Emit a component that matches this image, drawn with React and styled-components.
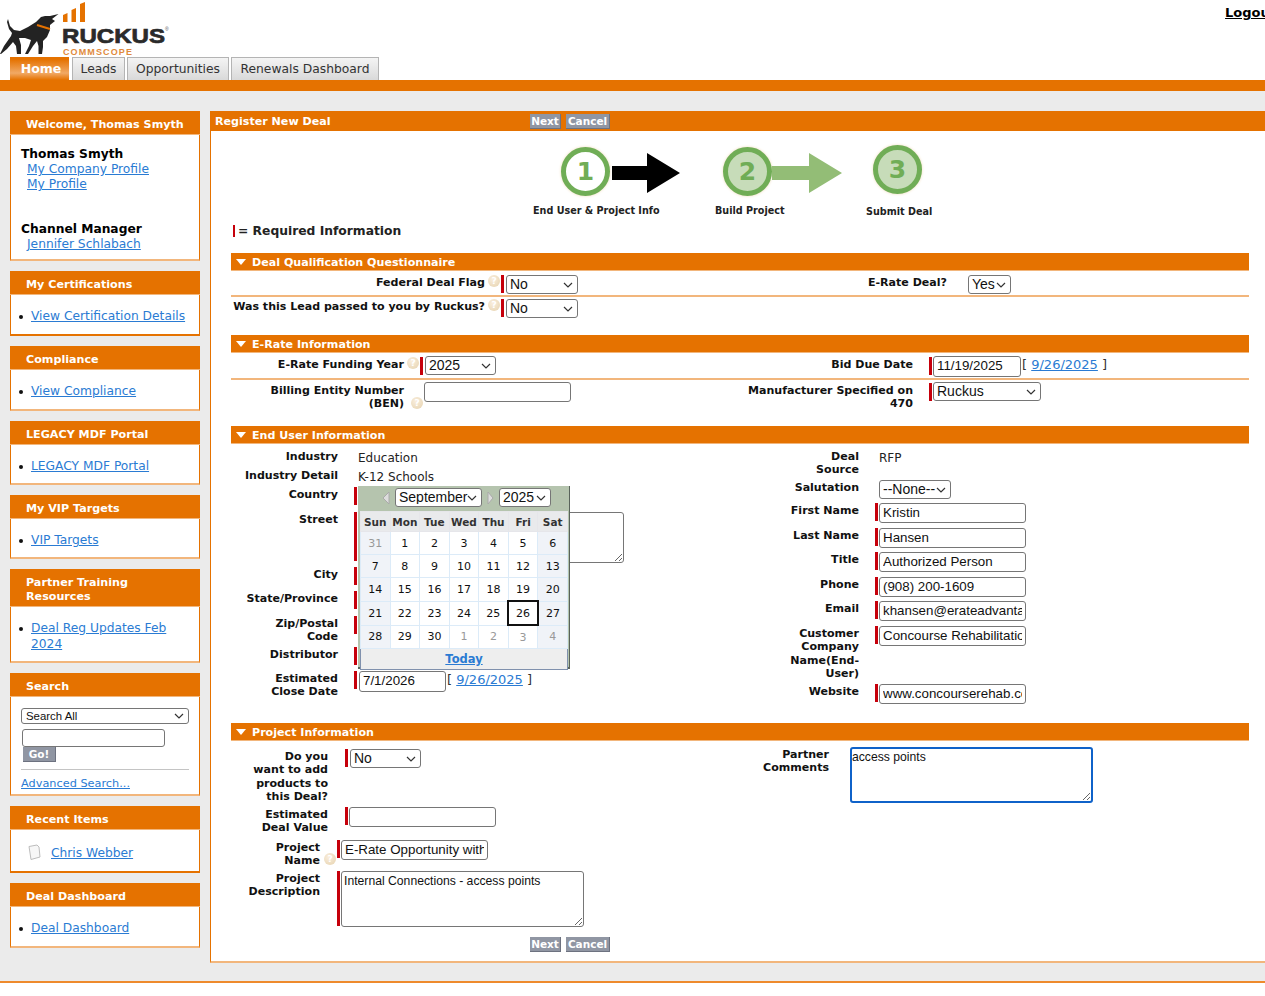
import {useState} from "react";
import styled, {createGlobalStyle} from "styled-components";

const orange = '#e57200'
const soft = '#f2b67c'
const link = '#2a7bd3'
const verdana = '"DejaVu Sans", Verdana, sans-serif'
const arial = '"Liberation Sans", Arial, sans-serif'
const chevron = "url(\"data:image/svg+xml,%3Csvg xmlns='http://www.w3.org/2000/svg' width='10' height='6'%3E%3Cpath d='M1 1l4 4 4-4' fill='none' stroke='%23333' stroke-width='1.2'/%3E%3C/svg%3E\")"

const Global = createGlobalStyle`
  html, body {
    margin: 0;
    padding: 0;
    background: #fff;
  }

  body {
    font-family: ${verdana};
    font-size: 12px;
    color: #000;
    overflow-x: hidden;
  }

  a {
    color: ${link};
    text-decoration: underline;
  }
`

const Page = styled.div`
  width: 1265px;
  height: 996px;
  overflow: hidden;
`

const Masthead = styled.header`
  height: 57px;
  width: 1276px;
  display: flex;
  justify-content: space-between;
  align-items: flex-start;
`

const Logout = styled.a`
  margin-top: 5px;
  font-size: 13px;
  font-weight: 700;
  color: #000;
`

const Tabs = styled.nav`
  display: flex;
  gap: 2px;
  padding-left: 10px;
  height: 23px;
`

const Tab = styled.a`
  box-sizing: border-box;
  height: 23px;
  width: ${p => p.$w}px;
  display: flex;
  align-items: center;
  justify-content: center;
  font-size: 12.3px;
  text-decoration: none;
  color: #333;
  border: 1px solid #b4b4b4;
  border-bottom: 0;
  background: linear-gradient(#f4f4f4, #d9d9d9);
  margin-left: ${p => p.$ml || 0}px;

  &.on {
    border: 0;
    padding-left: 3px;
    color: #fff;
    font-size: 12.5px;
    font-weight: 700;
    background: linear-gradient(${orange} 10%, #f1a965 70%, ${orange} 100%);
  }
`

const OrangeBar = styled.div`
  height: 11px;
  background: ${orange};
`

const Shell = styled.div`
  background: #ebebeb;
  height: 892px;
  border-bottom: 2px solid #ee8a2c;
  box-sizing: border-box;
  padding-top: 20px;
  display: flex;
  align-items: flex-start;
`

const Sidebar = styled.aside`
  width: 190px;
  margin-left: 10px;
  display: flex;
  flex-direction: column;
  gap: 10px;
  flex: none;
`

const SideBox = styled.section`
  box-sizing: border-box;
  height: ${p => p.$h}px;
  background: #fff;
  border: 1px solid ${orange};
  border-top: 0;
  border-bottom: 2px solid ${p => p.$soft ? soft : orange};
`

const SideHead = styled.h3`
  margin: 0 -1px;
  box-sizing: border-box;
  min-height: 24px;
  padding: 7px 10px 2px 16px;
  background: ${orange};
  color: #fff;
  font-size: 11.15px;
  line-height: 14px;
  font-weight: 700;
  border-bottom: 1px solid ${soft};
`

const SideList = styled.ul`
  margin: 0;
  padding: 13px 10px 0 8px;
  list-style: none;
  font-size: 12.25px;
  line-height: 16px;

  li {
    display: flex;
    gap: 8px;
  }

  li::before {
    content: '';
    flex: none;
    width: 4px;
    height: 4px;
    margin-top: 7px;
    border-radius: 50%;
    background: #111;
  }
`

const WelcomeBody = styled.div`
  padding: 12px 0 0 10px;
  font-size: 12.25px;
  line-height: 15px;

  strong {
    display: block;
  }

  a {
    display: block;
    margin-left: 6px;
  }
`

const Spacer = styled.div`
  height: ${p => p.$h}px;
`

const SearchBody = styled.div`
  padding: 11px 10px 0;

  hr {
    border: 0;
    border-top: 1px solid #c4c4c4;
    margin: 7px 0 6px;
  }

  a {
    font-size: 11.3px;
  }
`

const Recent = styled.div`
  display: flex;
  align-items: center;
  gap: 9px;
  padding: 14px 0 0 15px;
  font-size: 12.25px;
`

const Main = styled.main`
  margin-left: 10px;
  width: 1070px;
  flex: none;
  box-sizing: border-box;
  height: 852px;
  background: #fff;
  border-left: 1px solid ${orange};
  border-bottom: 2px solid ${soft};
`

const MainHead = styled.div`
  margin-left: -1px;
  height: 20px;
  background: ${orange};
  color: #fff;
  font-size: 11.1px;
  font-weight: 700;
  display: flex;
  align-items: center;
  padding-left: 5px;

  span {
    width: 315px;
  }
`

const Buttons = styled.div`
  display: flex;
  gap: 5px;
  padding-left: ${p => p.$pl || 0}px;
  margin-top: ${p => p.$mt || 0}px;
`

const Btn = styled.button`
  display: block;
  box-sizing: border-box;
  height: 15px;
  width: ${p => p.$w}px;
  padding: 0;
  margin-left: ${p => p.$ml || 0}px;
  border: 0;
  border-right: 1px solid #6d7280;
  border-bottom: 1px solid #6d7280;
  background: #9096a3;
  color: #fff;
  font-family: ${verdana};
  font-size: 10.5px;
  font-weight: 700;
`

const Stepper = styled.div`
  display: flex;
  padding: 13px 0 0 322px;
  height: 92px;
  box-sizing: border-box;
`

const Step = styled.div`
  width: ${p => p.$w}px;
  flex: none;
`

const StepTrack = styled.div`
  display: flex;
  align-items: center;
  height: 54px;
  padding-left: ${p => p.$pl}px;
`

const StepDot = styled.div`
  box-sizing: border-box;
  width: 49px;
  height: 49px;
  margin-top: ${p => p.$mt || 0}px;
  border-radius: 50%;
  border: 5px solid #70ad56;
  background: ${p => p.$done ? '#fff' : '#c7dcb9'};
  color: #70ad56;
  display: flex;
  align-items: center;
  justify-content: center;
  font: 700 25px ${verdana};
  box-shadow: 0 0 3px #f0dcbc;
  flex: none;
`

const StepArrow = styled.svg`
  display: block;
  flex: none;
  margin: 4px 0 0 ${p => p.$ml || 0}px;
`

const StepCaption = styled.div`
  font: 700 10.7px "DejaVu Sans Condensed", ${verdana};
  color: #222;
  margin-top: ${p => p.$mt}px;
`

const Required = styled.div`
  display: flex;
  align-items: center;
  height: 16px;
  margin: 0 0 14px 22px;
  font-size: 12.3px;
  font-weight: 700;
  color: #222;
  gap: 3px;
`

const Content = styled.div`
  width: 1018px;
  margin-left: 20px;
`

const SectionBar = styled.h4`
  margin: ${p => p.$mt || 0}px 0 0;
  box-sizing: border-box;
  height: 18px;
  background: ${orange};
  border-bottom: 1px solid ${soft};
  display: flex;
  align-items: center;
  gap: 5px;
  padding: 1px 0 0 5px;
  color: #fff;
  font-size: 11.1px;
  font-weight: 700;
`

const Caret = styled.i`
  width: 0;
  height: 0;
  border: 5px solid transparent;
  border-top: 6px solid #fff;
  border-bottom: 0;
  margin-right: 1px;
`

const SplitRow = styled.div`
  box-sizing: border-box;
  display: grid;
  grid-template-columns: 509px 1fr;
  height: ${p => p.$h}px;
  margin-top: ${p => p.$mt || 0}px;
  padding-top: ${p => p.$pt || 0}px;
  border-bottom: ${p => p.$line ? `2px solid ${soft}` : '0'};
`

const Columns = styled.div`
  display: grid;
  grid-template-columns: 509px 1fr;
  padding-top: ${p => p.$pt}px;
  position: relative;
`

const Stack = styled.div`
  display: flex;
  flex-direction: column;
  padding-top: ${p => p.$pt || 0}px;
`

const Field = styled.div`
  display: flex;
  align-items: flex-start;
  height: ${p => p.$h ? `${p.$h}px` : 'auto'};
`

const Label = styled.label`
  width: ${p => p.$w}px;
  margin-left: ${p => p.$ml || 0}px;
  flex: none;
  box-sizing: border-box;
  text-align: right;
  font-size: 11.05px;
  font-weight: 700;
  line-height: 13.4px;
  padding-top: ${p => p.$pt ?? 2}px;
  color: #111;
`

const Gutter = styled.div`
  width: ${p => p.$w || 20}px;
  flex: none;
  display: flex;
  justify-content: flex-end;
  align-items: flex-start;
  padding-top: 1px;
  gap: 1px;
  box-sizing: border-box;
  padding-right: ${p => p.$pr || 1}px;
`

const Mark = styled.span`
  display: block;
  width: ${p => p.$w || 3}px;
  height: ${p => p.$h || 18}px;
  background: #c6000b;
  flex: none;
`

const Help = styled.span`
  display: flex;
  align-items: center;
  justify-content: center;
  width: 12px;
  height: 12px;
  border-radius: 50%;
  background: radial-gradient(circle at 40% 35%, #f9eedd, #e6d2ae);
  color: #fff;
  font-size: 9px;
  font-weight: 700;
  margin-top: ${p => p.$mt || 0}px;
  flex: none;
`

const Value = styled.div`
  font-size: 12px;
  line-height: 15px;
  padding-top: 3px;
  color: #222;
`

const Select = styled.select`
  box-sizing: border-box;
  appearance: none;
  display: block;
  width: ${p => p.$w}px;
  height: ${p => p.$h || 19}px;
  margin: ${p => p.$mt ?? 1}px 0 0 ${p => p.$ml || 0}px;
  padding: 0 0 ${p => p.$h ? 0 : 2}px ${p => p.$pl || 3}px;
  border: 1px solid #767676;
  border-radius: 3px;
  font: ${p => p.$fs || 14}px ${arial};
  color: #111;
  background: #fff ${chevron} no-repeat right 4px center;
`

const Input = styled.input`
  display: block;
  box-sizing: border-box;
  width: ${p => p.$w || 147}px;
  height: ${p => p.$h || 20}px;
  margin: ${p => p.$mt ?? 1}px 0 0 ${p => p.$ml || 0}px;
  padding: 0 3px 2px;
  border: 1px solid #767676;
  border-radius: 3px;
  font: 13.33px ${arial};
  color: #111;
  background: #fff;
  outline: 0;
`

const Area = styled.textarea`
  box-sizing: border-box;
  display: block;
  width: ${p => p.$w}px;
  height: ${p => p.$h}px;
  margin: ${p => p.$mt || 0}px 0 0;
  padding: ${p => p.$focus ? '1px 0' : '2px'};
  border: ${p => p.$focus ? '2px solid #0f62c9' : '1px solid #767676'};
  border-radius: 3px;
  font: 12.2px ${arial};
  color: #111;
  outline: 0;
`

const DateLink = styled.span`
  font-size: 13px;
  line-height: 18px;
  padding-left: 1px;
  white-space: nowrap;
  color: #333;
  margin-top: ${p => p.$mt || 0}px;
`

const Calendar = styled.div`
  position: absolute;
  left: 127px;
  top: 42px;
  box-sizing: border-box;
  width: 212px;
  height: 183px;
  background: #b5c4ae;
  padding: 1px 2px 3px 2px;
  border-right: 1px solid #59635a;
  border-bottom: 2px solid #59635a;
`

const CalBar = styled.div`
  display: flex;
  align-items: flex-start;
  box-sizing: border-box;
  height: 24px;
  padding: 1px 0 0 22px;
  gap: 5px;
`

const CalArrow = styled.svg`
  display: block;
  flex: none;
  margin-top: 3px;
`

const CalTable = styled.table`
  width: 208px;
  table-layout: fixed;
  border-collapse: collapse;
  background: #eee;
  border: 1px solid #8091ad;
  font-size: 11px;

  th {
    height: 19px;
    padding: 0;
    font-size: 10.5px;
    font-weight: 700;
    color: #333;
    background: #e9eaec;
    border: 1px solid #e6e6ea;
  }

  td {
    height: 22px;
    padding: 0;
    text-align: center;
    background: #fff;
    color: #111;
    border: 1px solid #dcebf8;
  }

  td.end {
    background: #f0f3f8;
  }

  td.off {
    color: #999;
  }

  td.today {
    height: 21px;
    border: 2px solid #111;
    padding-top: 1px;
  }

  td.foot {
    height: 20px;
    background: #eee;
    border: 0;
    font-size: 11.5px;
    font-weight: 700;
  }
`

const calendar = [
    ['31', '1', '2', '3', '4', '5', '6'],
    ['7', '8', '9', '10', '11', '12', '13'],
    ['14', '15', '16', '17', '18', '19', '20'],
    ['21', '22', '23', '24', '25', '26', '27'],
    ['28', '29', '30', '1', '2', '3', '4'],
]

const Logo = () => (
    <svg width="170" height="57" viewBox="0 0 170 57">
        <g fill="#e57200">
            <path d="M63 15l4.500-2v9H63z"/>
            <path d="M71.500 10l4.500-2v14h-4.500z"/>
            <path d="M80 4l5-2v20h-5z"/>
        </g>
        <path fill="#232323" d="M58.500 14L52 19l3 2-5 4v5l-3 7-4 4v6l-1 7h-3.500v-8L37 41l-4 5-5 8h-3l4-8 2-6-6-2h-6l2 7v9h-4l-1-8-3-4-6 7-6 5H0l4-8 7-10 1-3-3-4-2-7 1-3 2 7 4 4 6 1 8-4 8-5 5-5 4-1 5 0z"/>
        <path stroke="#e57200" strokeWidth="2" fill="none" d="M37 25l13 4"/>
        <text x="62" y="43" fontFamily="Liberation Sans" fontWeight="700" fontSize="21" fill="#2a2a2a" stroke="#2a2a2a" strokeWidth=".7" textLength="103" lengthAdjust="spacingAndGlyphs">RUCKUS</text>
        <text x="165" y="31" fontFamily="Liberation Sans" fontSize="5" fill="#555">®</text>
        <text x="63" y="55" fontFamily="Liberation Sans" fontWeight="700" fontSize="9" fill="#e08a3c" textLength="69" lengthAdjust="spacing">COMMSCOPE</text>
    </svg>
)

const Doc = () => (
    <svg width="16" height="17" viewBox="0 0 16 17">
        <path d="M3 2.500l8-1.500 2 2 1 10-9 2.500z" fill="#f7f7f7" stroke="#bdbdbd"/>
    </svg>
)

const Arrow = ({color, ml, w = 68}) => (
    <StepArrow $ml={ml} width={w} height="40" viewBox={`0 0 ${w} 40`}>
        <path fill={color} d={`M0 13H${w - 33}V0L${w} 20 ${w - 33} 40V27H0z`}/>
    </StepArrow>
)

const SideLinkBox = ({title, h, soft, children}) => (
    <SideBox $h={h} $soft={soft}>
        <SideHead>{title}</SideHead>
        <SideList>
            <li><a href="#">{children}</a></li>
        </SideList>
    </SideBox>
)

const App = () => {
    const [month, setMonth] = useState('September')

    return (
        <Page>
            <Global/>
            <Masthead>
                <Logo/>
                <Logout href="#">Logout</Logout>
            </Masthead>
            <Tabs>
                <Tab className="on" $w={59} href="#">Home</Tab>
                <Tab $w={53} $ml={1} href="#">Leads</Tab>
                <Tab $w={102} href="#">Opportunities</Tab>
                <Tab $w={148} href="#">Renewals Dashboard</Tab>
            </Tabs>
            <OrangeBar/>
            <Shell>
                <Sidebar>
                    <SideBox $h={150} $soft>
                        <SideHead>Welcome, Thomas Smyth</SideHead>
                        <WelcomeBody>
                            <strong>Thomas Smyth</strong>
                            <a href="#">My Company Profile</a>
                            <a href="#">My Profile</a>
                            <Spacer $h={30}/>
                            <strong>Channel Manager</strong>
                            <a href="#">Jennifer Schlabach</a>
                        </WelcomeBody>
                    </SideBox>
                    <SideLinkBox title="My Certifications" h={65}>View Certification Details</SideLinkBox>
                    <SideLinkBox title="Compliance" h={65} soft>View Compliance</SideLinkBox>
                    <SideLinkBox title="LEGACY MDF Portal" h={64} soft>LEGACY MDF Portal</SideLinkBox>
                    <SideLinkBox title="My VIP Targets" h={64} soft>VIP Targets</SideLinkBox>
                    <SideLinkBox title="Partner Training Resources" h={94} soft>Deal Reg Updates Feb 2024</SideLinkBox>
                    <SideBox $h={123} $soft>
                        <SideHead>Search</SideHead>
                        <SearchBody>
                            <Select $w={168} $h={16} $fs={11.4} $mt={0} $pl={4} defaultValue="all">
                                <option value="all">Search All</option>
                            </Select>
                            <Input $w={143} $h={18} $mt={5} $ml={1}/>
                            <Btn $w={33} $ml={2}>Go!</Btn>
                            <hr/>
                            <a href="#">Advanced Search...</a>
                        </SearchBody>
                    </SideBox>
                    <SideBox $h={67}>
                        <SideHead>Recent Items</SideHead>
                        <Recent><Doc/><a href="#">Chris Webber</a></Recent>
                    </SideBox>
                    <SideLinkBox title="Deal Dashboard" h={65} soft>Deal Dashboard</SideLinkBox>
                </Sidebar>
                <Main>
                    <MainHead>
                        <span>Register New Deal</span>
                        <Buttons>
                            <Btn $w={31}>Next</Btn>
                            <Btn $w={44}>Cancel</Btn>
                        </Buttons>
                    </MainHead>
                    <Stepper>
                        <Step $w={182}>
                            <StepTrack $pl={28}>
                                <StepDot $done>1</StepDot>
                                <Arrow color="#000" ml={2}/>
                            </StepTrack>
                            <StepCaption $mt={6}>End User &amp; Project Info</StepCaption>
                        </Step>
                        <Step $w={151}>
                            <StepTrack $pl={8}>
                                <StepDot>2</StepDot>
                                <Arrow color="#93bd76" w={70}/>
                            </StepTrack>
                            <StepCaption $mt={6}>Build Project</StepCaption>
                        </Step>
                        <Step $w={100}>
                            <StepTrack $pl={7}>
                                <StepDot $mt={-3}>3</StepDot>
                            </StepTrack>
                            <StepCaption $mt={7}>Submit Deal</StepCaption>
                        </Step>
                    </Stepper>
                    <Required><Mark $w={2} $h={12}/>= Required Information</Required>
                    <Content>
                        <SectionBar><Caret/>Deal Qualification Questionnaire</SectionBar>
                        <SplitRow $h={26} $line $pt={3}>
                            <Field>
                                <Label $w={254}>Federal Deal Flag</Label>
                                <Gutter $w={21} $pr={2}><Help>?</Help><Mark/></Gutter>
                                <Select $w={72} defaultValue="No"><option>No</option></Select>
                            </Field>
                            <Field>
                                <Label $w={207}>E-Rate Deal?</Label>
                                <Gutter $w={21}/>
                                <Select $w={43} defaultValue="Yes"><option>Yes</option></Select>
                            </Field>
                        </SplitRow>
                        <SplitRow $h={37} $mt={1}>
                            <Field>
                                <Label $w={258} $ml={-4}>Was this Lead passed to you by Ruckus?</Label>
                                <Gutter $w={21} $pr={2}><Help>?</Help><Mark/></Gutter>
                                <Select $w={72} defaultValue="No"><option>No</option></Select>
                            </Field>
                        </SplitRow>
                        <SectionBar><Caret/>E-Rate Information</SectionBar>
                        <SplitRow $h={27} $line $pt={3}>
                            <Field>
                                <Label $w={173}>E-Rate Funding Year</Label>
                                <Gutter $w={21} $pr={2}><Help>?</Help><Mark/></Gutter>
                                <Select $w={71} $mt={0} defaultValue="2025"><option>2025</option></Select>
                            </Field>
                            <Field>
                                <Label $w={173}>Bid Due Date</Label>
                                <Gutter $w={20}><Mark/></Gutter>
                                <Input $w={88} $h={21} $mt={0} defaultValue="11/19/2025"/>
                                <DateLink>[ <a href="#">9/26/2025</a> ]</DateLink>
                            </Field>
                        </SplitRow>
                        <SplitRow $h={46} $pt={2}>
                            <Field>
                                <Label $w={150} $ml={23}>Billing Entity Number (BEN)</Label>
                                <Gutter $w={20}><Help $mt={14}>?</Help></Gutter>
                                <Input $w={147} $h={20} $mt={0}/>
                            </Field>
                            <Field>
                                <Label $w={173}>Manufacturer Specified on 470</Label>
                                <Gutter $w={20}><Mark/></Gutter>
                                <Select $w={108} $mt={0} defaultValue="Ruckus"><option>Ruckus</option></Select>
                            </Field>
                        </SplitRow>
                        <SectionBar><Caret/>End User Information</SectionBar>
                        <Columns $pt={4}>
                            <Stack>
                                <Field $h={19}><Label $w={96} $ml={11}>Industry</Label><Gutter/><Value>Education</Value></Field>
                                <Field $h={19}><Label $w={96} $ml={11}>Industry Detail</Label><Gutter/><Value>K-12 Schools</Value></Field>
                                <Field $h={25}><Label $w={96} $ml={11}>Country</Label><Gutter><Mark/></Gutter></Field>
                                <Field $h={55}>
                                    <Label $w={96} $ml={11}>Street</Label>
                                    <Gutter><Mark $h={49}/></Gutter>
                                    <Area $w={266} $h={51} $mt={1}/>
                                </Field>
                                <Field $h={24}><Label $w={96} $ml={11}>City</Label><Gutter><Mark/></Gutter></Field>
                                <Field $h={25}><Label $w={96} $ml={11}>State/Province</Label><Gutter><Mark/></Gutter></Field>
                                <Field $h={31}><Label $w={96} $ml={11}>Zip/Postal Code</Label><Gutter><Mark/></Gutter></Field>
                                <Field $h={24}><Label $w={96} $ml={11}>Distributor</Label><Gutter><Mark/></Gutter></Field>
                                <Field $h={30}>
                                    <Label $w={96} $ml={11}>Estimated Close Date</Label>
                                    <Gutter><Mark/></Gutter>
                                    <Input $w={87} $h={21} $ml={1} defaultValue="7/1/2026"/>
                                    <DateLink $mt={1}>[ <a href="#">9/26/2025</a> ]</DateLink>
                                </Field>
                            </Stack>
                            <Stack>
                                <Field $h={31}><Label $w={72} $ml={47}>Deal Source</Label><Gutter/><Value>RFP</Value></Field>
                                <Field $h={23}>
                                    <Label $w={72} $ml={47}>Salutation</Label>
                                    <Gutter/>
                                    <Select $w={72} defaultValue="--None--"><option>--None--</option></Select>
                                </Field>
                                <Field $h={25}><Label $w={72} $ml={47}>First Name</Label><Gutter><Mark/></Gutter><Input defaultValue="Kristin"/></Field>
                                <Field $h={24}><Label $w={72} $ml={47}>Last Name</Label><Gutter><Mark/></Gutter><Input defaultValue="Hansen"/></Field>
                                <Field $h={25}><Label $w={72} $ml={47}>Title</Label><Gutter><Mark/></Gutter><Input defaultValue="Authorized Person"/></Field>
                                <Field $h={24}><Label $w={72} $ml={47}>Phone</Label><Gutter><Mark/></Gutter><Input defaultValue="(908) 200-1609"/></Field>
                                <Field $h={25}><Label $w={72} $ml={47}>Email</Label><Gutter><Mark/></Gutter><Input defaultValue="khansen@erateadvantage.com"/></Field>
                                <Field $h={58}>
                                    <Label $w={72} $ml={47}>Customer Company Name(End-User)</Label>
                                    <Gutter><Mark/></Gutter>
                                    <Input defaultValue="Concourse Rehabilitation"/>
                                </Field>
                                <Field $h={30}><Label $w={72} $ml={47}>Website</Label><Gutter><Mark/></Gutter><Input defaultValue="www.concourserehab.com"/></Field>
                            </Stack>
                            <Calendar>
                                <CalBar>
                                    <CalArrow width="8" height="14" viewBox="0 0 8 14"><path d="M7 1v12L1 7z" fill="#ddd" stroke="#aaa"/></CalArrow>
                                    <Select $w={87} $mt={0} value={month} onChange={e => setMonth(e.target.value)}>
                                        <option>September</option>
                                        <option>October</option>
                                    </Select>
                                    <CalArrow width="7" height="14" viewBox="0 0 7 14"><path d="M1 1v12l5-6z" fill="#ddd" stroke="#aaa"/></CalArrow>
                                    <Select $w={52} $mt={0} defaultValue="2025"><option>2025</option></Select>
                                </CalBar>
                                <CalTable>
                                    <thead>
                                    <tr>
                                        {['Sun', 'Mon', 'Tue', 'Wed', 'Thu', 'Fri', 'Sat'].map(d => <th key={d}>{d}</th>)}
                                    </tr>
                                    </thead>
                                    <tbody>
                                    {calendar.map((week, w) => (
                                        <tr key={w}>
                                            {week.map((d, i) => {
                                                const off = (w === 0 && i === 0) || (w === 4 && i > 2)
                                                const end = i === 0 || i === 6
                                                const today = w === 3 && i === 5
                                                return <td key={i} className={[end && 'end', off && 'off', today && 'today'].filter(Boolean).join(' ')}>{d}</td>
                                            })}
                                        </tr>
                                    ))}
                                    <tr>
                                        <td className="foot" colSpan={7}><a href="#">Today</a></td>
                                    </tr>
                                    </tbody>
                                </CalTable>
                            </Calendar>
                        </Columns>
                        <SectionBar $mt={10}><Caret/>Project Information</SectionBar>
                        <Columns $pt={6}>
                            <Stack $pt={1}>
                                <Field $h={58}>
                                    <Label $w={77} $ml={20}>Do you want to add products to this Deal?</Label>
                                    <Gutter $w={21}><Mark/></Gutter>
                                    <Select $w={71} $ml={1} defaultValue="No"><option>No</option></Select>
                                </Field>
                                <Field $h={33}>
                                    <Label $w={77} $ml={20}>Estimated Deal Value</Label>
                                    <Gutter $w={21}><Mark/></Gutter>
                                    <Input $w={147}/>
                                </Field>
                                <Field $h={31}>
                                    <Label $w={72} $ml={17}>Project Name</Label>
                                    <Gutter $w={21}><Help $mt={13}>?</Help><Mark/></Gutter>
                                    <Input $w={147} defaultValue="E-Rate Opportunity with Concourse"/>
                                </Field>
                                <Field $h={60}>
                                    <Label $w={72} $ml={17}>Project Description</Label>
                                    <Gutter $w={21}><Mark $h={55}/></Gutter>
                                    <Area $w={243} $h={56} $mt={1} defaultValue="Internal Connections - access points"/>
                                </Field>
                            </Stack>
                            <Stack>
                                <Field>
                                    <Label $w={89} $pt={1}>Partner Comments</Label>
                                    <Gutter $w={21}/>
                                    <Area $focus $w={243} $h={56} defaultValue="access points"/>
                                </Field>
                            </Stack>
                        </Columns>
                        <Buttons $pl={299} $mt={7}>
                            <Btn $w={31}>Next</Btn>
                            <Btn $w={44}>Cancel</Btn>
                        </Buttons>
                    </Content>
                </Main>
            </Shell>
        </Page>
    )
}

export default App;
